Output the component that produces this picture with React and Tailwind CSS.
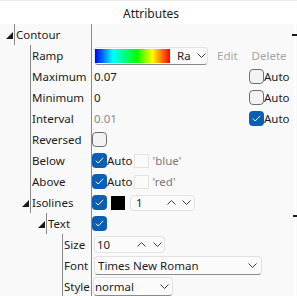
const font = { fontFamily: '"Noto Sans", "Open Sans", sans-serif' };

function Chevron({ up = false, className = "" }) {
  return (
    <svg width="9" height="5" viewBox="0 0 9 5" className={className}>
      <path
        d={up ? "M0.5 4.5 L4.5 0.5 L8.5 4.5" : "M0.5 0.5 L4.5 4.5 L8.5 0.5"}
        fill="none"
        stroke="#3a3a3a"
        strokeWidth="1"
      />
    </svg>
  );
}

function Check({ checked = false }) {
  if (!checked) {
    return <span className="block h-[15px] w-[15px] shrink-0 rounded-[4px] border border-[#6f6f6f] bg-[#f3f3f3]" />;
  }
  return (
    <span className="grid h-[15px] w-[15px] shrink-0 place-items-center rounded-[4px] bg-[#0a5fb4]">
      <svg width="9" height="7" viewBox="0 0 9 7">
        <path d="M0.8 3.6 L3.2 6 L8.2 0.8" fill="none" stroke="#ffffff" strokeWidth="1" />
      </svg>
    </span>
  );
}

function Expander() {
  return (
    <svg width="7" height="7" viewBox="0 0 7 7" className="mt-[1px]">
      <polygon points="7,0 7,7 0,7" fill="#1a1a1a" />
    </svg>
  );
}

const spacers = ["w-[6px]", "w-[22px]", "w-[38px]", "w-[54px]"];

function Row({ level, expand = false, label, children }) {
  return (
    <div className="flex h-[21px]">
      <div className="flex w-[92px] shrink-0 border-r border-[#8a8a8a]">
        <span className={`${spacers[level]} shrink-0`} />
        <span className="flex w-[8px] shrink-0 items-center">{expand && <Expander />}</span>
        <span className="flex h-full items-center border-l border-[#8a8a8a] pl-[1px]">{label}</span>
      </div>
      <div className="flex min-w-0 flex-1 items-center">{children}</div>
    </div>
  );
}

function Auto({ checked }) {
  return (
    <span className="flex items-center">
      <Check checked={checked} />
      <span>Auto</span>
    </span>
  );
}

export default function App() {
  return (
    <div className="relative h-[296px] w-[297px] overflow-hidden bg-[#f9f9f9] text-[11.5px] text-[#1b1b1b]" style={font}>
      <div className="flex h-[24px] items-end justify-center border-t border-[#ececec] bg-white pb-[1px] pl-[5px] text-[12px]">
        Attributes
      </div>

      <Row level={0} expand label="Contour" />
      <Row level={1} label="Ramp">
        <div className="ml-[2px] flex h-[18px] w-[114px] items-center rounded-[4px] border border-[#e2e2e2] border-b-[#8a8a8a] bg-[#fbfbfb] pl-[0px]">
          <span className="h-[14px] w-[75px] bg-[linear-gradient(to_right,#0000ff_0%,#00ffff_24%,#00ff00_56%,#ffff00_76%,#ff0000_100%)]" />
          <span className="ml-[7px]">Ra</span>
          <Chevron className="ml-[6px]" />
        </div>
        <span className="ml-[9px] text-[#a6a6a6]">Edit</span>
        <span className="ml-[14px] text-[#a6a6a6]">Delete</span>
      </Row>
      <Row level={1} label="Maximum">
        <span className="w-[157px] pl-[2px]">0.07</span>
        <Auto checked={false} />
      </Row>
      <Row level={1} label="Minimum">
        <span className="w-[157px] pl-[2px]">0</span>
        <Auto checked={false} />
      </Row>
      <Row level={1} label="Interval">
        <span className="w-[157px] pl-[2px] text-[#8a8a8a]">0.01</span>
        <Auto checked />
      </Row>
      <Row level={1} label="Reversed">
        <Check />
      </Row>
      <Row level={1} label="Below">
        <Auto checked />
        <span className="ml-[1px] h-[14px] w-[15px] border border-[#e3e3e3] bg-[#fbfbfb]" />
        <span className="ml-[4px] text-[#7a7a7a]">'blue'</span>
      </Row>
      <Row level={1} label="Above">
        <Auto checked />
        <span className="ml-[1px] h-[14px] w-[15px] border border-[#e3e3e3] bg-[#fbfbfb]" />
        <span className="ml-[4px] text-[#7a7a7a]">'red'</span>
      </Row>
      <Row level={1} expand label="Isolines">
        <Check checked />
        <span className="ml-[4px] h-[14px] w-[14px] bg-black" />
        <div className="ml-[5px] flex h-[16px] w-[65px] items-center rounded-[4px] border border-[#e2e2e2] bg-[#fbfbfb] pl-[5px]">
          <span>1</span>
          <Chevron up className="ml-auto" />
          <Chevron className="ml-[6px] mr-[3px]" />
        </div>
      </Row>
      <Row level={2} expand label="Text">
        <Check checked />
      </Row>
      <Row level={3} label="Size">
        <div className="ml-[2px] flex h-[17px] w-[71px] items-center rounded-[4px] border border-[#e2e2e2] bg-[#fbfbfb] pl-[2px]">
          <span>10</span>
          <Chevron up className="ml-auto" />
          <Chevron className="ml-[7px] mr-[2px]" />
        </div>
      </Row>
      <Row level={3} label="Font">
        <div className="ml-[2px] flex h-[19px] w-[168px] items-center rounded-[4px] border border-[#e2e2e2] border-b-[#8a8a8a] bg-[#fbfbfb] pl-[3px]">
          <span>Times New Roman</span>
          <Chevron className="ml-auto mr-[4px]" />
        </div>
      </Row>
      <Row level={3} label="Style">
        <div className="ml-[1px] flex h-[19px] w-[80px] items-center rounded-[4px] border border-[#e2e2e2] border-b-[#8a8a8a] bg-[#fbfbfb] pl-[1px]">
          <span>normal</span>
          <Chevron className="ml-auto mr-[3px]" />
        </div>
      </Row>

      <span className="absolute right-[1px] top-[24px] h-[272px] w-[2px] bg-[#ffffff]" />
      <span className="absolute right-0 top-[34px] h-[2px] w-[5px] bg-[#1a1a1a]" />
      <span className="absolute right-0 top-[215px] h-[2px] w-[4px] bg-[#1a1a1a]" />
    </div>
  );
}
